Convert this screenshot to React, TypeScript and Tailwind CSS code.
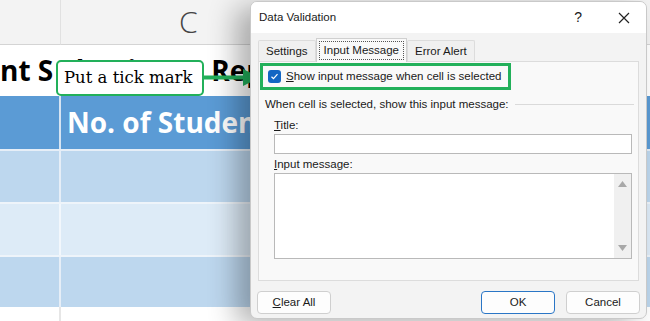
import React from "react";

const dlgFont = { fontFamily: '"Liberation Sans", Arial, sans-serif' };

function Sheet() {
  return (
    <div className="absolute inset-0 grid grid-cols-[61px_1fr] bg-white" style={{ fontFamily: '"Open Sans", "Liberation Sans", sans-serif' }}>
      {/* column header */}
      <div className="h-[45px] bg-[#f3f3f3] border-b border-[#d4d4d4] border-r border-r-[#e1e1e1]" />
      <div className="h-[45px] bg-[#f3f3f3] border-b border-[#d4d4d4] pl-[118px] pt-[4px] text-[30px] text-[#444] font-light leading-[36px]">
        C
      </div>
      {/* title row, middle part sits under the callout */}
      <div className="col-span-2 h-[51px] overflow-hidden whitespace-nowrap text-[28px] font-bold leading-[50px] text-black flex">
        <span>nt S</span>
        <span className="w-[151px] pl-[6px] overflow-hidden shrink-0">election</span>
        <span className="ml-[7px]">Report</span>
      </div>
      {/* header row */}
      <div className="h-[53px] bg-[#5b9bd5] border-r-2 border-[#d6e4f2]" />
      <div className="h-[53px] bg-[#5b9bd5] pl-[6px] text-[28px] font-bold leading-[52px] text-white whitespace-nowrap overflow-hidden">
        No. of Students
      </div>
      <div className="h-[2px] col-span-2 bg-[#e6eef7]" />
      <div className="h-[51px] bg-[#bdd7ee] border-r-2 border-[#e6eef7]" />
      <div className="h-[51px] bg-[#bdd7ee]" />
      <div className="h-[2px] col-span-2 bg-[#eef4fa]" />
      <div className="h-[51px] bg-[#ddebf7] border-r-2 border-[#f2f7fc]" />
      <div className="h-[51px] bg-[#ddebf7]" />
      <div className="h-[2px] col-span-2 bg-[#eef4fa]" />
      <div className="h-[50px] bg-[#bdd7ee] border-r-2 border-[#e6eef7]" />
      <div className="h-[50px] bg-[#bdd7ee]" />
      <div className="h-[20px] border-r-2 border-[#e6e6e6]" />
      <div className="h-[20px]" />
    </div>
  );
}

function Dialog() {
  return (
    <div
      className="absolute left-[250px] top-[1px] w-[397px] h-[318px] rounded-[7px] bg-[#f3f3f3] border border-[#c9c9c9] shadow-[-14px_6px_28px_rgba(0,0,0,0.3)] overflow-hidden flex flex-col text-[11.5px] text-[#1a1a1a]"
      style={dlgFont}
    >
      {/* title bar */}
      <div className="h-[31px] bg-white flex items-center pl-[8px] pr-[14px] shrink-0">
        <span className="text-[11.5px]">Data Validation</span>
        <span className="ml-auto mr-[36px] text-[14px]">?</span>
        <svg width="12" height="12" viewBox="0 0 12 12" className="mr-[2px]">
          <path d="M1 1L11 11M11 1L1 11" stroke="#222" strokeWidth="1.2" />
        </svg>
      </div>
      {/* tabs */}
      <div className="flex items-end pl-[7px] pt-[6px] h-[28px] shrink-0">
        <div className="px-[7px] h-[21px] border border-b-0 border-[#dcdcdc] bg-[#f0f0f0] rounded-t-[2px] leading-[20px]">Settings</div>
        <div className="h-[24px] px-[2px] pt-[2px] bg-[#f9f9f9] border border-b-0 border-[#d0d0d0] -mb-px relative z-10">
          <div className="px-[4px] border border-dotted border-[#555] leading-[17px]">Input Message</div>
        </div>
        <div className="px-[7px] h-[21px] border border-b-0 border-[#dcdcdc] bg-[#f0f0f0] rounded-t-[2px] leading-[20px]">Error Alert</div>
      </div>
      {/* panel */}
      <div className="mx-[7px] h-[220px] bg-[#f9f9f9] border border-[#dcdcdc] flex flex-col shrink-0">
        <div className="ml-[1px] mt-[1px] w-[251px] h-[27px] border-[3px] border-[#22b05a] flex items-center pl-[5px] gap-[5px] whitespace-nowrap">
          <div className="w-[13px] h-[13px] rounded-[3px] bg-[#1366c3] flex items-center justify-center shrink-0">
            <svg width="9" height="9" viewBox="0 0 9 9">
              <path d="M1.5 4.7L3.5 6.6L7.5 2.2" stroke="white" strokeWidth="1.2" fill="none" />
            </svg>
          </div>
          <span><span className="underline">S</span>how input message when cell is selected</span>
        </div>
        <div className="flex items-center mt-[7px] pl-[6px] pr-[4px] gap-[6px] leading-[14px]">
          <span className="whitespace-nowrap">When cell is selected, show this input message:</span>
          <div className="flex-1 h-px bg-[#dadada]" />
        </div>
        <div className="pl-[15px] pr-[6px] mt-[7px]">
          <div className="leading-[14px]"><span className="underline">T</span>itle:</div>
          <div className="mt-[2px] h-[20px] bg-white border border-[#b9b9b9]" />
          <div className="mt-[3px] leading-[14px]"><span className="underline">I</span>nput message:</div>
          <div className="mt-[2px] h-[86px] bg-white border border-[#b9b9b9] flex justify-end">
            <div className="w-[17px] h-full bg-[#f0f0f0] flex flex-col items-center justify-between py-[7px]">
              <svg width="9" height="6" viewBox="0 0 9 6"><path d="M0 6L4.5 0L9 6Z" fill="#a8a8a8" /></svg>
              <svg width="9" height="6" viewBox="0 0 9 6"><path d="M0 0L4.5 6L9 0Z" fill="#a8a8a8" /></svg>
            </div>
          </div>
        </div>
      </div>
      {/* buttons */}
      <div className="flex items-center px-[6px] mt-[10px]">
        <button className="w-[74px] h-[23px] bg-[#fdfdfd] border border-[#cfcfcf] rounded-[4px]"><span className="underline">C</span>lear All</button>
        <button className="ml-auto w-[74px] h-[23px] bg-[#fdfdfd] border border-[#2a76c6] rounded-[4px]">OK</button>
        <button className="ml-[11px] w-[74px] h-[23px] bg-[#fdfdfd] border border-[#cfcfcf] rounded-[4px]">Cancel</button>
      </div>
    </div>
  );
}

function Callout() {
  return (
    <>
      <div
        className="absolute left-[56px] top-[60px] w-[148px] h-[36px] bg-white border-2 border-[#22b05a] rounded-[5px] flex items-center pl-[6px] text-[16.5px] text-black"
        style={{ fontFamily: '"DejaVu Serif", Georgia, serif' }}
      >
        Put a tick mark
      </div>
      <svg className="absolute left-[203px] top-[68px]" width="58" height="20" viewBox="0 0 58 20">
        <path d="M0 9.5H44" stroke="#22b05a" strokeWidth="4" />
        <path d="M40 1L57 9.5L40 18Z" fill="#22b05a" />
      </svg>
    </>
  );
}

export default function App() {
  return (
    <div className="relative w-[650px] h-[321px] overflow-hidden bg-white">
      <Sheet />
      <Callout />
      <Dialog />
    </div>
  );
}
